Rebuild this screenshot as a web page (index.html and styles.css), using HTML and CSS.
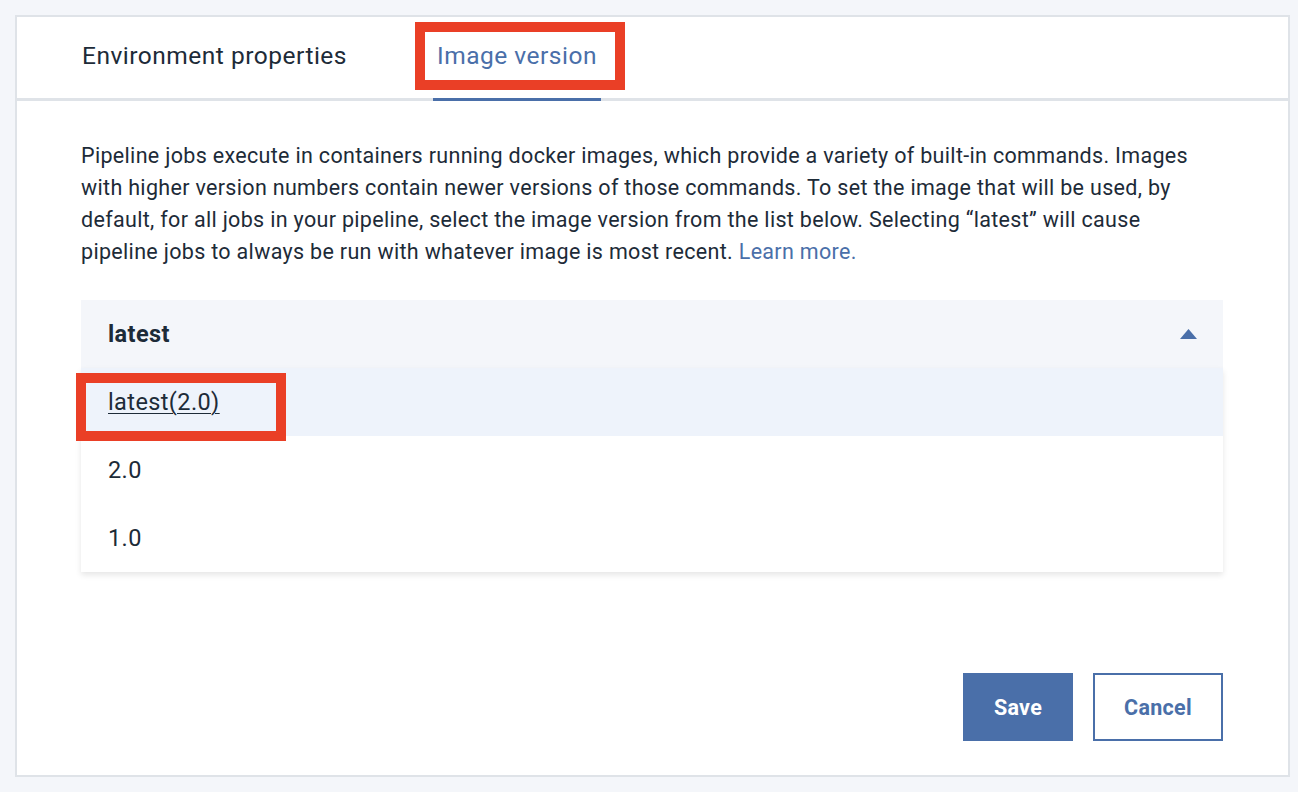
FILE: index.html
```html
<!DOCTYPE html>
<html lang="en">
<head>
<meta charset="utf-8">
<title>Image version</title>
<link rel="stylesheet" href="styles.css">
</head>
<body>
<div class="card">
  <div class="tabs">
    <div class="tab">Environment properties</div>
    <div class="tab tab-active">Image version<span class="mark mark-tab"></span></div>
  </div>
  <div class="content">
    <p class="desc">Pipeline jobs execute in containers running docker images, which provide a variety of built-in commands. Images with higher version numbers contain newer versions of those commands. To set the image that will be used, by default, for all jobs in your pipeline, select the image version from the list below. Selecting “latest” will cause pipeline jobs to always be run with whatever image is most recent. <a class="link" href="#">Learn more.</a></p>
    <div class="dropdown">
      <div class="dd-head">
        <span class="dd-value">latest</span>
        <svg class="dd-arrow" width="17" height="10" viewBox="0 0 17 10"><path d="M0 10 L8.5 0 L17 10 Z" fill="#4a6fa9"/></svg>
      </div>
      <ul class="dd-list">
        <li class="dd-item dd-item-sel"><span class="dd-sel-text">latest(2.0)</span><span class="mark mark-item"></span></li>
        <li class="dd-item">2.0</li>
        <li class="dd-item">1.0</li>
      </ul>
    </div>
    <div class="actions">
      <button class="btn btn-primary">Save</button>
      <button class="btn btn-secondary">Cancel</button>
    </div>
  </div>
</div>
</body>
</html>
```
FILE: styles.css
```css
* { box-sizing: border-box; }
html, body { margin: 0; padding: 0; }
body {
  background: #f4f6fa;
  font-family: Roboto, "Noto Sans", "Liberation Sans", sans-serif;
  color: #1d2b38;
  padding: 15px 8px 0 15px;
}
.card {
  width: 1275px;
  height: 762px;
  background: #fff;
  border: 2px solid #dfe3e8;
  display: flex;
  flex-direction: column;
}
.tabs {
  display: flex;
  height: 84px;
  border-bottom: 3px solid #dfe3e8;
  padding-left: 61px;
  gap: 82px;
}
.tab {
  position: relative;
  font-size: 24.5px;
  letter-spacing: 0.5px;
  padding: 0 4px 5px;
  display: flex;
  align-items: center;
  color: #1d2b38;
  margin-bottom: -3px;
  border-bottom: 3px solid transparent;
}
.tab-active {
  color: #4a6fa9;
  border-bottom-color: #4a6fa9;
}
.mark {
  position: absolute;
  border: 10px solid #ea3f26;
  pointer-events: none;
}
.mark-tab {
  left: -18px;
  top: 5px;
  width: 210px;
  height: 68px;
}
.content {
  padding: 39px 65px 0 64px;
  display: flex;
  flex-direction: column;
  flex: 1;
}
.desc {
  margin: 0;
  font-size: 21.5px;
  letter-spacing: 0.32px;
  line-height: 32px;
}
.link {
  color: #4a6fa9;
  text-decoration: none;
}
.dropdown {
  margin-top: 32px;
}
.dd-head {
  height: 68px;
  background: #f4f6fa;
  display: flex;
  align-items: center;
  justify-content: space-between;
  padding: 0 26px 0 27px;
}
.dd-value {
  font-weight: 700;
  font-size: 23.5px;
  letter-spacing: 0.4px;
}
.dd-arrow { display: block; }
.dd-list {
  list-style: none;
  margin: 0;
  padding: 0;
  background: #fff;
  box-shadow: 0 3px 6px rgba(0, 0, 0, 0.10);
}
.dd-item {
  position: relative;
  height: 68px;
  display: flex;
  align-items: center;
  padding-left: 27px;
  font-size: 23.5px;
  letter-spacing: 0.4px;
}
.dd-item-sel {
  background: #eef3fb;
}
.dd-sel-text {
  text-decoration: underline;
  text-decoration-thickness: 1px;
  text-underline-offset: 3px;
}
.mark-item {
  left: -5px;
  top: 5px;
  width: 210px;
  height: 68px;
}
.actions {
  margin-top: auto;
  margin-bottom: 34px;
  display: flex;
  justify-content: flex-end;
  gap: 20px;
}
.btn {
  height: 68px;
  font-family: inherit;
  font-size: 21.5px;
  letter-spacing: 0.3px;
  font-weight: 700;
  cursor: pointer;
}
.btn-primary {
  width: 110px;
  background: #4a6fa9;
  color: #fff;
  border: none;
}
.btn-secondary {
  width: 130px;
  background: #fff;
  color: #4a6fa9;
  border: 2px solid #4a6fa9;
}
```
